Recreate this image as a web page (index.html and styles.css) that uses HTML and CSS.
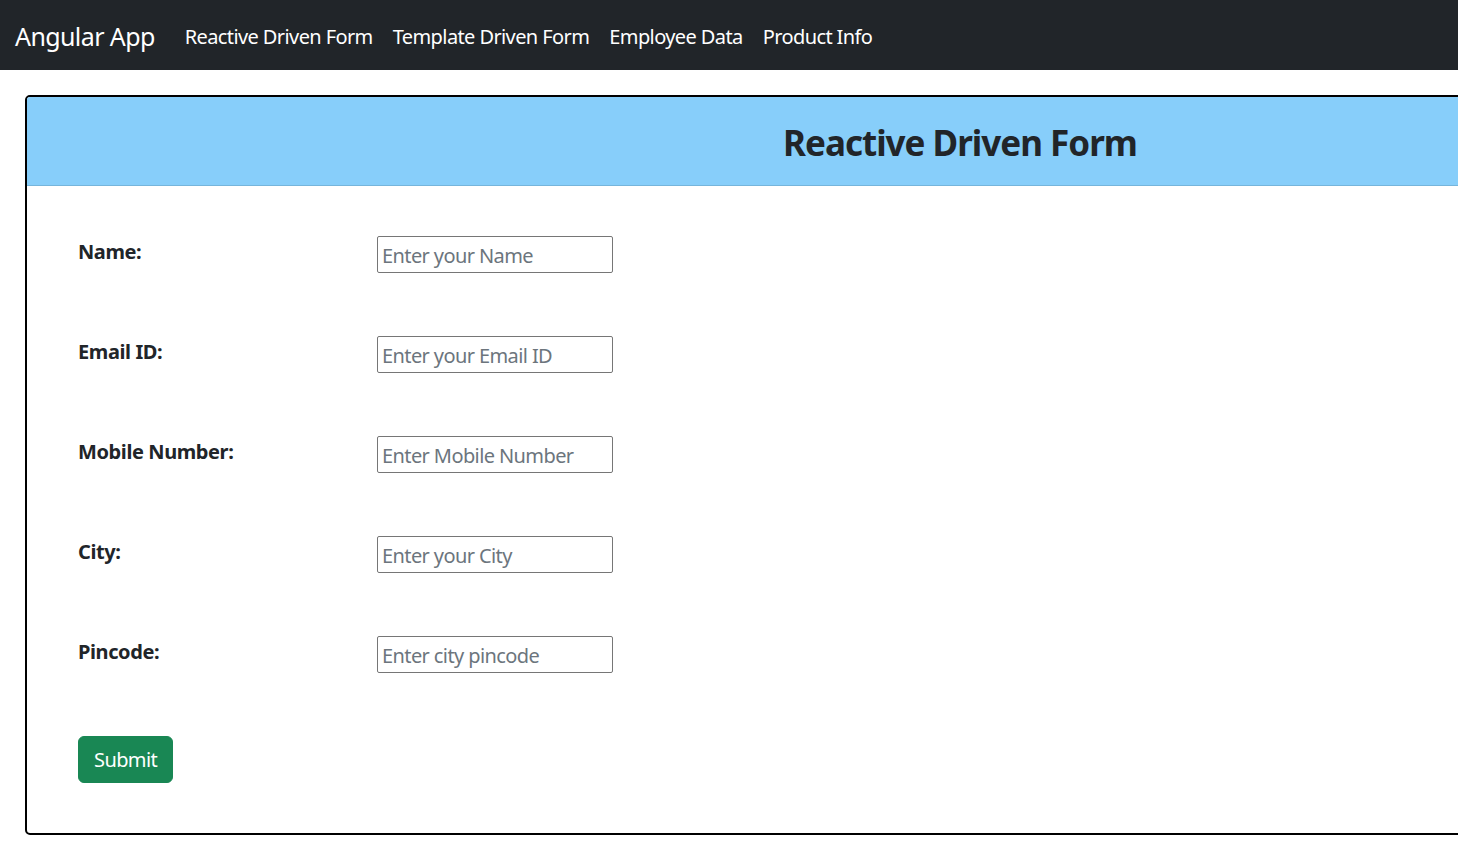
FILE: index.html
```html
<!DOCTYPE html>
<html lang="en">
<head>
<meta charset="utf-8">
<title>Angular App</title>
<link rel="stylesheet" href="styles.css">
</head>
<body>
<nav class="navbar">
  <a class="brand" href="#">Angular App</a>
  <ul class="nav">
    <li><a class="nav-link" href="#">Reactive Driven Form</a></li>
    <li><a class="nav-link" href="#">Template Driven Form</a></li>
    <li><a class="nav-link" href="#">Employee Data</a></li>
    <li><a class="nav-link" href="#">Product Info</a></li>
  </ul>
</nav>
<main class="page">
  <section class="card">
    <header class="card-header">
      <h1 class="card-title">Reactive Driven Form</h1>
    </header>
    <form class="card-body">
      <div class="row">
        <label class="label" for="name">Name:</label>
        <input class="input" id="name" type="text" placeholder="Enter your Name">
      </div>
      <div class="row">
        <label class="label" for="email">Email ID:</label>
        <input class="input" id="email" type="text" placeholder="Enter your Email ID">
      </div>
      <div class="row">
        <label class="label" for="mobile">Mobile Number:</label>
        <input class="input" id="mobile" type="text" placeholder="Enter Mobile Number">
      </div>
      <div class="row">
        <label class="label" for="city">City:</label>
        <input class="input" id="city" type="text" placeholder="Enter your City">
      </div>
      <div class="row">
        <label class="label" for="pin">Pincode:</label>
        <input class="input" id="pin" type="text" placeholder="Enter city pincode">
      </div>
      <button class="btn" type="submit">Submit</button>
    </form>
  </section>
</main>
</body>
</html>
```

FILE: styles.css
```css
html { overflow: hidden; }
* { box-sizing: border-box; }
body {
  margin: 0;
  font-family: "Noto Sans", "Open Sans", sans-serif;
  font-size: 20px;
  line-height: 1.5;
  letter-spacing: -0.6px;
  color: #212529;
  background: #fff;
}
.navbar {
  height: 70px;
  background: #212529;
  display: flex;
  align-items: center;
  padding: 3px 15px 0;
}
.brand {
  color: #fff;
  text-decoration: none;
  font-size: 25px;
  letter-spacing: -0.6px;
  margin-right: 20px;
}
.nav {
  list-style: none;
  margin: 0;
  padding: 0;
  display: flex;
}
.nav-link {
  display: block;
  padding: 10px 10px;
  color: #fff;
  text-decoration: none;
  font-size: 20px;
}
.page {
  padding: 25px 0 0 25px;
}
.card {
  width: 1870px;
  border: 2px solid #000;
  border-radius: 5px;
  overflow: hidden;
}
.card-header {
  background: #87cefa;
  border-bottom: 1px solid rgba(0, 0, 0, 0.12);
  padding: 22px 0 18px;
  text-align: center;
}
.card-title {
  margin: 0;
  font-size: 35px;
  font-weight: 700;
  letter-spacing: -1px;
  line-height: 48px;
  color: #212529;
}
.card-body {
  padding: 50px 51px 50px;
  display: flex;
  flex-direction: column;
  align-items: flex-start;
}
.row {
  display: flex;
  align-items: flex-start;
  height: 100px;
}
.label {
  width: 299px;
  font-weight: 700;
  letter-spacing: -0.4px;
  padding-top: 1px;
}
.input {
  width: 236px;
  height: 37px;
  border: 1px solid #767676;
  border-radius: 2px;
  padding: 2px 4px 0;
  font-family: inherit;
  font-size: 20px;
  letter-spacing: -0.6px;
  color: #212529;
}
.input::placeholder {
  color: #6c757d;
}
.btn {
  background: #198754;
  color: #fff;
  border: 1px solid #198754;
  border-radius: 6px;
  padding: 7.5px 15px;
  font-family: inherit;
  font-size: 20px;
  letter-spacing: -0.6px;
  line-height: 30px;
}
```
